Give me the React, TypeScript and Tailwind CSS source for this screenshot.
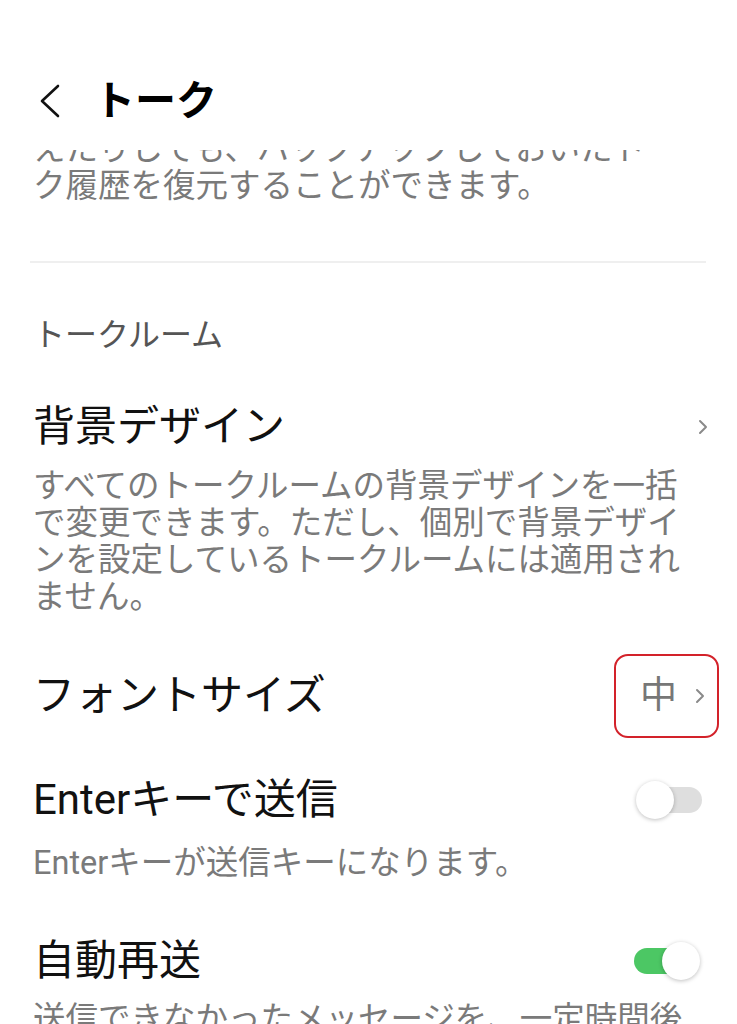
import React from "react";

const font = { fontFamily: 'Roboto, "Noto Sans CJK JP", "Noto Sans", sans-serif' };

const ChevronRight = ({ className = "" }: { className?: string }) => (
  <svg className={className} width="10" height="16" viewBox="0 0 10 16" fill="none">
    <path d="M2 2l6 6-6 6" stroke="#8a8a8a" strokeWidth="2" strokeLinecap="round" strokeLinejoin="round" />
  </svg>
);

const Toggle = ({ on }: { on: boolean }) =>
  on ? (
    <div className="relative w-[66px] h-[38px]">
      <div className="absolute left-0 top-[6px] w-[54px] h-[26px] rounded-full bg-[#4cc764]" />
      <div className="absolute right-0 top-0 w-[38px] h-[38px] rounded-full bg-white shadow-[0_1px_4px_rgba(0,0,0,0.25)]" />
    </div>
  ) : (
    <div className="relative w-[66px] h-[38px]">
      <div className="absolute right-0 top-[6px] w-[54px] h-[26px] rounded-full bg-[#dedede]" />
      <div className="absolute left-0 top-0 w-[38px] h-[38px] rounded-full bg-white shadow-[0_1px_4px_rgba(0,0,0,0.25)]" />
    </div>
  );

const Desc = ({ children, className = "" }: { children: React.ReactNode; className?: string }) => (
  <p className={"max-w-[656px] text-[32.5px] leading-[37px] text-[#7a7a7a] " + className}>{children}</p>
);

const Title = ({ children }: { children: React.ReactNode }) => (
  <span className="text-[42px] leading-[50px] text-[#111]">{children}</span>
);

export default function App() {
  return (
    <div className="w-[737px] h-[1024px] bg-white overflow-hidden flex flex-col" style={font}>
      <header className="h-[150px] shrink-0 relative z-10 bg-white pt-[76px]">
        <div className="flex items-center h-[50px] pl-[40px]">
          <svg width="20" height="34" viewBox="0 0 20 34" fill="none">
            <path d="M18 2L2 17l16 15" stroke="#111" strokeWidth="2.6" strokeLinecap="round" strokeLinejoin="round" />
          </svg>
          <h1 className="ml-[34px] text-[41px] leading-[50px] font-bold text-black">トーク</h1>
        </div>
      </header>

      <main className="flex-1 overflow-hidden pl-[33px] pr-[31px]">
        <Desc className="-mt-[56px]">
          <span className="block">スマートフォンを紛失したり、機種を買い替</span>
          <span className="block">えたりしても、バックアップしておいたトー</span>
          <span className="block">ク履歴を復元することができます。</span>
        </Desc>

        <div className="mt-[56px] -ml-[3px] h-[2px] bg-[#efefef]" />

        <p className="mt-[54px] text-[32px] leading-[37px] text-[#555]">トークルーム</p>

        <div className="mt-[48px] flex items-center justify-between">
          <Title>背景デザイン</Title>
          <ChevronRight className="mr-[-2px]" />
        </div>
        <Desc className="mt-[16px]">
          すべてのトークルームの背景デザインを一括
          <br />
          で変更できます。ただし、個別で背景デザイ
          <br />
          ンを設定しているトークルームには適用され
          <br />
          ません。
        </Desc>

        <div className="mt-[55px] flex items-center justify-between">
          <Title>フォントサイズ</Title>
          <div className="-my-[17px] -mr-[13px] w-[105px] h-[84px] rounded-[14px] border-[2.5px] border-[#d3222a] flex items-center justify-end gap-[18px] pr-[12px]">
            <span className="text-[37px] leading-[40px] text-[#777]">中</span>
            <ChevronRight />
          </div>
        </div>

        <div className="mt-[54px] flex items-center justify-between">
          <Title>Enterキーで送信</Title>
          <div className="mr-[4px]">
            <Toggle on={false} />
          </div>
        </div>
        <Desc className="mt-[20px]">Enterキーが送信キーになります。</Desc>

        <div className="mt-[54px] flex items-center justify-between">
          <Title>自動再送</Title>
          <div className="mr-[6px]">
            <Toggle on={true} />
          </div>
        </div>
        <Desc className="mt-[15px]">
          送信できなかったメッセージを、一定時間後
          <br />
          に自動で再送します。
        </Desc>
      </main>
    </div>
  );
}
